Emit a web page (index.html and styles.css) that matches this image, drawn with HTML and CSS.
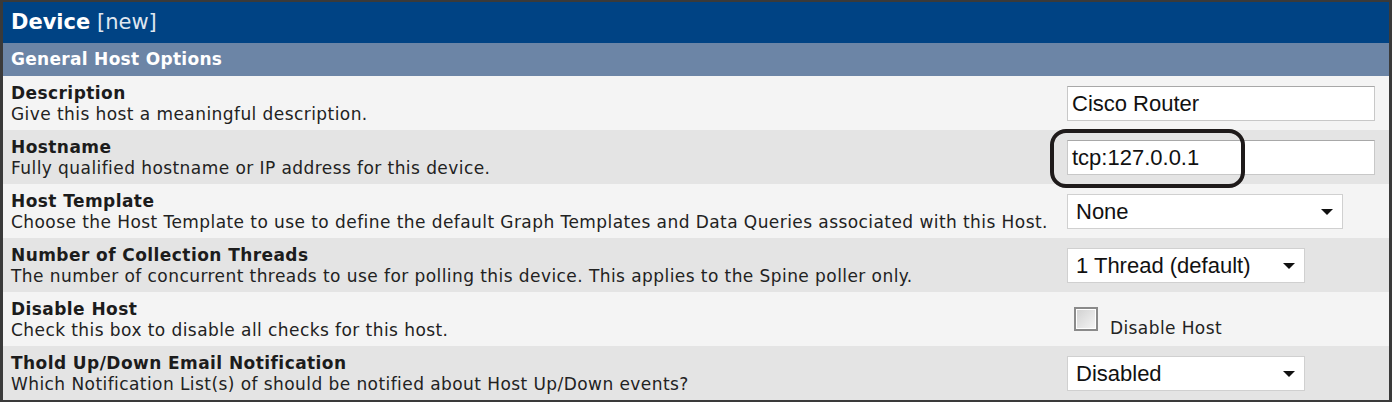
FILE: index.html
```html
<!DOCTYPE html>
<html>
<head>
<meta charset="utf-8">
<link rel="stylesheet" href="styles.css">
</head>
<body>
<div class="panel">
  <div class="head"><b>Device</b> <span class="sub">[new]</span></div>
  <div class="section">General Host Options</div>
  <div class="row light">
    <div class="label"><div class="title">Description</div><div class="desc">Give this host a meaningful description.</div></div>
    <div class="field"><div class="input">Cisco Router</div></div>
  </div>
  <div class="row dark">
    <div class="label"><div class="title">Hostname</div><div class="desc">Fully qualified hostname or IP address for this device.</div></div>
    <div class="field"><div class="input">tcp:127.0.0.1</div><div class="mark"></div></div>
  </div>
  <div class="row light">
    <div class="label"><div class="title">Host Template</div><div class="desc">Choose the Host Template to use to define the default Graph Templates and Data Queries associated with this Host.</div></div>
    <div class="field"><div class="select w276">None<span class="arrow"></span></div></div>
  </div>
  <div class="row dark">
    <div class="label"><div class="title">Number of Collection Threads</div><div class="desc">The number of concurrent threads to use for polling this device. This applies to the Spine poller only.</div></div>
    <div class="field"><div class="select w238">1 Thread (default)<span class="arrow"></span></div></div>
  </div>
  <div class="row light">
    <div class="label"><div class="title">Disable Host</div><div class="desc">Check this box to disable all checks for this host.</div></div>
    <div class="field check"><span class="box"></span><span class="cklabel">Disable Host</span></div>
  </div>
  <div class="row dark">
    <div class="label"><div class="title">Thold Up/Down Email Notification</div><div class="desc">Which Notification List(s) of should be notified about Host Up/Down events?</div></div>
    <div class="field"><div class="select w238">Disabled<span class="arrow"></span></div></div>
  </div>
</div>
</body>
</html>
```
FILE: styles.css
```css
html, body { margin: 0; padding: 0; background: #fff; }
body { width: 1394px; height: 406px; overflow: hidden; }
.panel {
  width: 1386px;
  border-top: 2px solid #3a3a3a;
  border-left: 3px solid #3a3a3a;
  border-right: 3px solid #3a3a3a;
  border-bottom: 2px solid #3a3a3a;
  font-family: "DejaVu Sans", Verdana, sans-serif;
}
.head {
  height: 41px;
  background: #004384;
  color: #fff;
  font-size: 21px;
  line-height: 41px;
  padding-left: 8px;
}
.head .sub { color: #dfe6f0; font-weight: normal; }
.section {
  height: 33px;
  background: #6c85a6;
  color: #fff;
  font-weight: bold;
  font-size: 17px;
  letter-spacing: 0.3px;
  line-height: 33px;
  padding-left: 8px;
}
.row {
  display: flex;
  align-items: center;
  height: 54px;
}
.light { background: #f4f4f4; }
.dark { background: #e4e4e4; }
.label { flex: 1; padding-left: 8px; padding-top: 2px; color: #1c1c1c; letter-spacing: 0.43px; }
.title { font-weight: bold; font-size: 17px; line-height: 20px; }
.desc { font-size: 17px; line-height: 22px; color: #222; }
.field {
  width: 322px;
  box-sizing: border-box;
  position: relative;
  display: flex;
  align-items: center;
}
.input {
  width: 308px;
  height: 35px;
  box-sizing: border-box;
  background: #fff;
  border: 1px solid #c8c8c8;
  border-top-color: #a8a8a8;
  font-family: "Liberation Sans", Arial, sans-serif;
  font-size: 22px;
  line-height: 33px;
  padding-left: 4px;
  color: #111;
}
.mark {
  position: absolute;
  left: -17px;
  top: -11px;
  width: 187px;
  height: 51px;
  border: 4px solid #1e1a1a;
  border-radius: 16px;
}
.select {
  height: 35px;
  box-sizing: border-box;
  background: #fff;
  border: 1px solid #d0d0d0;
  font-family: "Liberation Sans", Arial, sans-serif;
  font-size: 22px;
  line-height: 33px;
  padding-left: 8px;
  color: #111;
  position: relative;
}
.w276 { width: 276px; }
.w238 { width: 238px; }
.arrow {
  position: absolute;
  right: 9px;
  top: 14px;
  width: 0; height: 0;
  border-left: 6px solid transparent;
  border-right: 6px solid transparent;
  border-top: 6px solid #111;
}
.check { padding-left: 7px; }
.box {
  width: 20px; height: 20px;
  border: 2px solid #8a8a8a;
  background: linear-gradient(135deg, #d0d0d0, #f6f6f6);
  box-shadow: inset 0 0 0 1px #fff;
  margin-top: 0;
}
.cklabel {
  font-family: "DejaVu Sans", Verdana, sans-serif;
  font-size: 17px;
  letter-spacing: 0.4px;
  color: #222;
  margin-left: 12px;
  margin-top: 18px;
}
```
